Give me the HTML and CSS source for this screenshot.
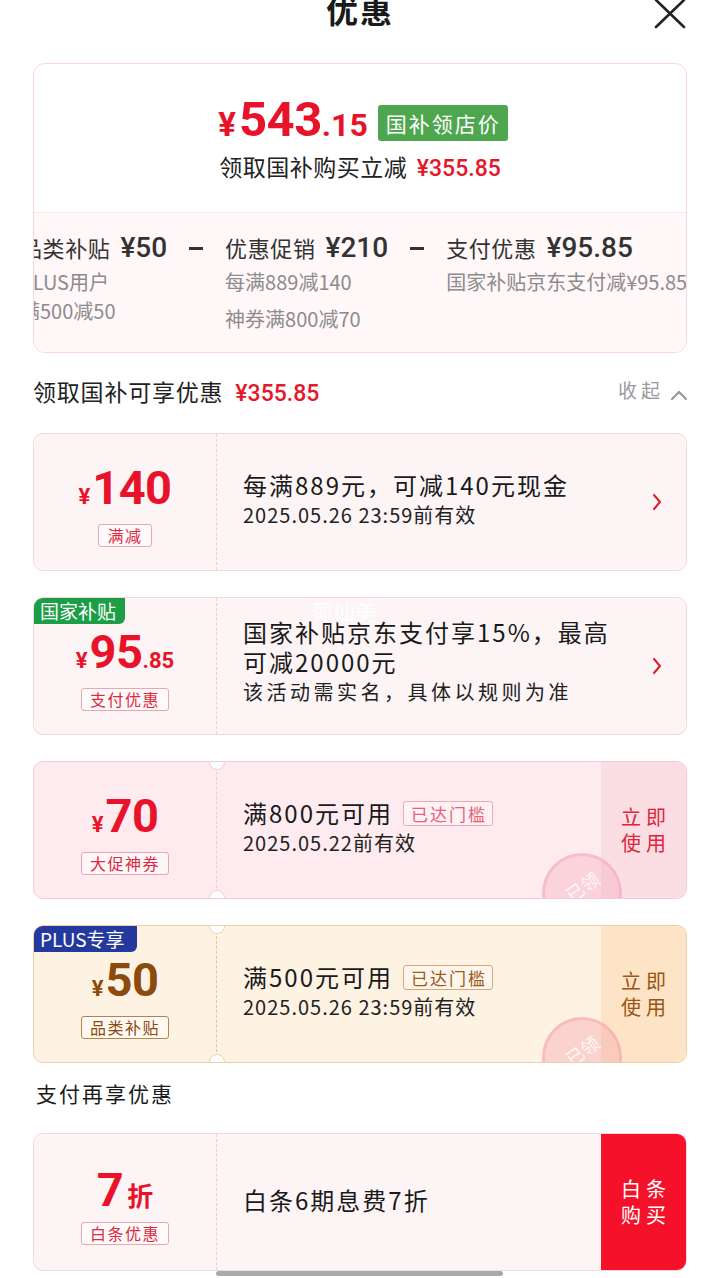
FILE: index.html
```html
<!DOCTYPE html>
<html lang="zh">
<head>
<meta charset="utf-8">
<title>优惠</title>
<link rel="stylesheet" href="styles.css">
</head>
<body>
<div class="page">
  <header class="header">
    <div></div>
    <h1 class="title">优惠</h1>
    <div class="close">
      <svg width="32" height="30" viewBox="0 0 32 30"><path d="M2 1 L30 28 M30 1 L2 28" stroke="#222" stroke-width="2.6" stroke-linecap="round" fill="none"/></svg>
    </div>
  </header>

  <section class="summary">
    <div class="summary-top">
      <div class="price-row">
        <span class="big-price"><span class="yen">¥</span><span class="int">543</span><span class="dec">.15</span></span>
        <span class="green-badge">国补领店价</span>
      </div>
      <div class="sub-line">领取国补购买立减 <span class="red-num">¥355.85</span></div>
    </div>
    <div class="summary-bottom">
      <div class="track">
        <div class="col col1">
          <div class="col-title">品类补贴<span class="col-num">¥50</span></div>
          <div class="col-sub">PLUS用户</div>
          <div class="col-sub second tight">满500减50</div>
        </div>
        <div class="sep"><span></span></div>
        <div class="col">
          <div class="col-title">优惠促销<span class="col-num">¥210</span></div>
          <div class="col-sub">每满889减140</div>
          <div class="col-sub second">神券满800减70</div>
        </div>
        <div class="sep"><span></span></div>
        <div class="col">
          <div class="col-title">支付优惠<span class="col-num">¥95.85</span></div>
          <div class="col-sub">国家补贴京东支付减¥95.85</div>
        </div>
      </div>
    </div>
  </section>

  <div class="section-head">
    <div class="sh-left">领取国补可享优惠 <span class="red-num">¥355.85</span></div>
    <div class="sh-right">收起
      <svg width="18" height="12" viewBox="0 0 18 12"><path d="M2 10 L9 3 L16 10" stroke="#999" stroke-width="2.2" fill="none" stroke-linecap="round" stroke-linejoin="round"/></svg>
    </div>
  </div>

  <div class="coupon pink">
    <div class="c-left">
      <div class="c-price red"><span class="c-yen">¥</span><span class="c-int">140</span></div>
      <span class="c-tag red-tag">满减</span>
    </div>
    <div class="c-div"></div>
    <div class="c-mid">
      <div class="c-main">每满889元，可减140元现金</div>
      <div class="c-date">2025.05.26 23:59前有效</div>
    </div>
    <div class="c-arrow">
      <svg width="12" height="18" viewBox="0 0 12 18"><path d="M3 2 L9 9 L3 16" stroke="#e0192c" stroke-width="2" fill="none" stroke-linecap="round" stroke-linejoin="round"/></svg>
    </div>
  </div>

  <div class="coupon pink">
    <span class="corner-badge green">国家补贴</span>
    <span class="watermark">葡仙美</span>
    <div class="c-left">
      <div class="c-price red"><span class="c-yen">¥</span><span class="c-int">95</span><span class="c-dec">.85</span></div>
      <span class="c-tag red-tag">支付优惠</span>
    </div>
    <div class="c-div"></div>
    <div class="c-mid three">
      <div class="c-main">国家补贴京东支付享15%，最高<br>可减20000元</div>
      <div class="c-sub">该活动需实名，具体以规则为准</div>
    </div>
    <div class="c-arrow">
      <svg width="12" height="18" viewBox="0 0 12 18"><path d="M3 2 L9 9 L3 16" stroke="#e0192c" stroke-width="2" fill="none" stroke-linecap="round" stroke-linejoin="round"/></svg>
    </div>
  </div>

  <div class="coupon rose">
    <div class="c-left">
      <div class="c-price red"><span class="c-yen">¥</span><span class="c-int">70</span></div>
      <span class="c-tag red-tag">大促神券</span>
    </div>
    <div class="c-div notched"></div>
    <div class="c-mid">
      <div class="c-main">满800元可用<span class="reach pink-reach">已达门槛</span></div>
      <div class="c-date">2025.05.22前有效</div>
    </div>
    <div class="stamp"><span>已领</span></div>
    <div class="c-action rose-action">立即<br>使用</div>
  </div>

  <div class="coupon cream">
    <span class="corner-badge blue">PLUS专享</span>
    <div class="c-left">
      <div class="c-price brown"><span class="c-yen">¥</span><span class="c-int">50</span></div>
      <span class="c-tag brown-tag">品类补贴</span>
    </div>
    <div class="c-div notched"></div>
    <div class="c-mid">
      <div class="c-main">满500元可用<span class="reach brown-reach">已达门槛</span></div>
      <div class="c-date">2025.05.26 23:59前有效</div>
    </div>
    <div class="stamp"><span>已领</span></div>
    <div class="c-action cream-action">立即<br>使用</div>
  </div>

  <div class="label">支付再享优惠</div>

  <div class="coupon pink">
    <div class="c-left">
      <div class="c-price red"><span class="c-int">7</span><span class="c-zhe">折</span></div>
      <span class="c-tag red-tag">白条优惠</span>
    </div>
    <div class="c-div"></div>
    <div class="c-mid">
      <div class="c-main">白条6期息费7折</div>
    </div>
    <div class="c-action red-action">白条<br>购买</div>
  </div>

  <div class="scrollbar"></div>
</div>
</body>
</html>
```

FILE: styles.css
```css
* { box-sizing: border-box; }
html, body { margin: 0; padding: 0; background: #fff; }
body {
  font-family: "Noto Sans CJK SC", "Noto Sans", sans-serif;
  color: #222;
  width: 720px;
  height: 1278px;
  overflow: hidden;
}
.page { position: relative; height: 1278px; display: flow-root; }

.header {
  display: grid;
  grid-template-columns: 1fr auto 1fr;
  align-items: center;
  height: 40px;
  margin-top: -11px;
}
.title {
  margin: 0;
  font-size: 32px;
  font-weight: 700;
  line-height: 40px;
  color: #1a1a1a;
  letter-spacing: 2px;
}
.close { justify-self: end; padding-right: 34px; display: flex; margin-top: 10px; }

.summary {
  margin: 34px 33px 0;
  border: 1.5px solid #f7d7dc;
  border-radius: 12px;
  overflow: hidden;
}
.summary-top {
  height: 148px;
  display: flex;
  flex-direction: column;
  align-items: center;
  padding-top: 36px;
}
.price-row { display: flex; align-items: center; gap: 10px; padding-left: 6px; }
.big-price {
  font-family: Roboto, "Liberation Sans", sans-serif;
  font-weight: 700;
  color: #e8132a;
  line-height: 40px;
  display: flex;
  align-items: baseline;
}
.big-price .yen { font-size: 33px; margin-right: 3px; }
.big-price .int { font-size: 49px; letter-spacing: -0.5px; }
.big-price .dec { font-size: 32px; }
.green-badge {
  background: #4ea64f;
  color: #fff;
  font-size: 21px;
  line-height: 36px;
  height: 36px;
  padding: 0 7px 0 8px;
  border-radius: 3px;
  letter-spacing: 2px;
}
.sub-line {
  margin-top: 6px;
  font-size: 23px;
  line-height: 30px;
  color: #222;
  letter-spacing: 0.5px;
}
.red-num {
  font-family: Roboto, "Liberation Sans", sans-serif;
  font-weight: 500;
  color: #e4172b;
  font-size: 23px;
  letter-spacing: 0;
  margin-left: 4px;
}

.summary-bottom {
  position: relative;
  height: 140px;
  background: #fff7f8;
  border-top: 1px solid #fbe7ea;
  overflow: hidden;
}
.summary-bottom::before {
  content: "";
  position: absolute;
  left: 318px;
  top: -7px;
  width: 12px;
  height: 12px;
  background: #fff7f8;
  border-top: 1px solid #fbe7ea;
  border-left: 1px solid #fbe7ea;
  transform: rotate(45deg);
}
.track {
  display: flex;
  gap: 22px;
  margin-left: -14px;
  padding-top: 19px;
  white-space: nowrap;
}
.col { display: flex; flex-direction: column; }
.col-title {
  font-size: 22px;
  line-height: 30px;
  color: #333;
  display: flex;
  align-items: baseline;
  gap: 10px;
  letter-spacing: 0.6px;
}
.col-num {
  font-family: Roboto, "Liberation Sans", sans-serif;
  font-size: 28px;
  font-weight: 500;
  color: #333;
  letter-spacing: 0;
}
.sep {
  width: 14px;
  height: 30px;
  display: flex;
  align-items: center;
}
.sep span {
  display: block;
  width: 14px;
  height: 3px;
  background: #333;
  margin-top: 2px;
}
.col-sub {
  font-size: 20px;
  line-height: 28px;
  color: #8c8c8c;
  margin-top: 5px;
}
.col-sub.second { margin-top: 9px; }
.col-sub.second.tight { margin-top: 1px; }

.section-head {
  margin: 24px 32px 0 33px;
  height: 30px;
  display: flex;
  align-items: center;
  justify-content: space-between;
}
.sh-left { font-size: 23px; line-height: 30px; letter-spacing: 0.8px; }
.sh-left .red-num { margin-left: 6px; }
.sh-right {
  font-size: 19px;
  color: #999;
  display: flex;
  align-items: center;
  gap: 6px;
  margin-top: -6px;
  letter-spacing: 4px;
}
.sh-right svg { margin-top: 12px; }

.coupon {
  position: relative;
  margin: 26px 33px 0;
  height: 138px;
  border-radius: 10px;
  display: flex;
  overflow: hidden;
}
.pink { background: #fdf4f5; border: 1px solid #f4d8db; }
.rose { background: #fdebef; border: 1px solid #f6ccd4; }
.cream { background: #fef2e3; border: 1px solid #efcfa7; }

.c-left {
  width: 182px;
  flex: none;
  display: flex;
  flex-direction: column;
  align-items: center;
  justify-content: center;
  padding-top: 6px;
}
.c-price {
  font-family: Roboto, "Liberation Sans", sans-serif;
  font-weight: 700;
  display: flex;
  align-items: baseline;
  line-height: 48px;
}
.red { color: #e8132a; }
.brown { color: #8c4a0c; }
.c-yen { font-size: 22px; margin-right: 2px; }
.c-int { font-size: 47px; letter-spacing: -0.5px; }
.c-dec { font-size: 22px; }
.c-zhe { font-size: 26px; margin-left: 4px; font-family: "Noto Sans CJK SC", sans-serif; }
.c-tag {
  margin-top: 3px;
  font-size: 16px;
  line-height: 21px;
  padding: 0 8px;
  border-radius: 3px;
  background: rgba(255,255,255,0.55);
  letter-spacing: 1.5px;
}
.red-tag { color: #e0283c; border: 1px solid #eba7b0; }
.brown-tag { color: #8c4a0c; border: 1px solid #b5834f; }

.c-div {
  position: relative;
  width: 0;
  border-left: 1px dashed #f0cdd1;
}
.cream .c-div { border-left-color: #e8c39a; }
.c-div.notched::before,
.c-div.notched::after {
  content: "";
  position: absolute;
  left: -8px;
  width: 14px;
  height: 14px;
  border-radius: 50%;
  background: #fff;
}
.rose .c-div.notched::before, .rose .c-div.notched::after { border: 1px solid #f6ccd4; }
.cream .c-div.notched::before, .cream .c-div.notched::after { border: 1px solid #efcfa7; }
.c-div.notched::before { top: -8px; }
.c-div.notched::after { bottom: -8px; }

.c-mid {
  flex: 1;
  padding-left: 26px;
  display: flex;
  flex-direction: column;
  justify-content: center;
  padding-bottom: 4px;
}
.c-mid.three { padding-bottom: 8px; }
.c-main {
  font-size: 24px;
  line-height: 30px;
  color: #1a1a1a;
  display: flex;
  flex-wrap: wrap;
  align-items: center;
  letter-spacing: 2px;
}
.c-date {
  font-size: 20px;
  line-height: 30px;
  color: #222;
  letter-spacing: 1px;
}
.c-sub {
  font-size: 20px;
  line-height: 30px;
  color: #222;
  letter-spacing: 3.5px;
}
.reach {
  margin-left: 10px;
  font-size: 17px;
  line-height: 23px;
  padding: 0 5px 0 7px;
  border-radius: 3px;
  letter-spacing: 2px;
}
.pink-reach { color: #e9607a; border: 1px solid #f0a9b7; background: rgba(255,255,255,.35); }
.brown-reach { color: #9a5a1c; border: 1px solid #d6a877; background: rgba(255,255,255,.35); }

.c-arrow {
  width: 60px;
  display: flex;
  align-items: center;
  justify-content: center;
  padding-left: 2px;
}
.c-action {
  width: 85px;
  flex: none;
  display: flex;
  align-items: center;
  justify-content: center;
  text-align: center;
  font-size: 20px;
  line-height: 26px;
  letter-spacing: 5px;
  padding-left: 5px;
}
.rose-action { background: #fbdde4; color: #e0243a; }
.cream-action { background: #fde4c6; color: #9a5414; }
.red-action { background: #f5112a; color: #fff; }

.corner-badge {
  position: absolute;
  left: -1px;
  top: -1px;
  height: 27px;
  line-height: 27px;
  padding: 0 9px 0 7px;
  color: #fff;
  font-size: 19px;
  border-radius: 10px 0 6px 0;
  z-index: 2;
}
.corner-badge.green { background: #1b9e45; }
.corner-badge.blue { background: #24399d; padding-right: 12px; }

.watermark {
  position: absolute;
  left: 277px;
  top: -4px;
  font-size: 22px;
  color: rgba(255,255,255,0.9);
}

.stamp {
  position: absolute;
  left: 508px;
  top: 91px;
  width: 80px;
  height: 80px;
  border-radius: 50%;
  border: 3px solid rgba(244,170,185,0.5);
  background: rgba(246,175,190,0.4);
  display: flex;
  align-items: center;
  justify-content: center;
}
.cream .stamp { border-color: rgba(244,160,170,0.45); background: rgba(246,165,175,0.4); }
.stamp span {
  transform: rotate(-35deg);
  color: rgba(255,255,255,0.85);
  font-size: 18px;
  margin-top: -14px;
}

.label {
  margin: 15px 36px 0;
  font-size: 21px;
  line-height: 30px;
  color: #1a1a1a;
  letter-spacing: 2px;
}
.label + .coupon { margin-top: 25px; }

.scrollbar {
  position: absolute;
  left: 216px;
  top: 1271px;
  width: 287px;
  height: 5px;
  border-radius: 3px;
  background: #a9a9a9;
}
```
